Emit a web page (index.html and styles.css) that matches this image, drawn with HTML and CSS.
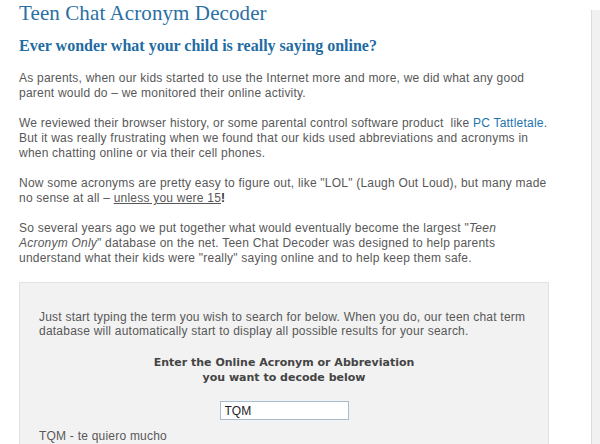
FILE: index.html
```html
<!DOCTYPE html>
<html>
<head>
<meta charset="utf-8">
<link rel="stylesheet" href="styles.css">
</head>
<body>
<div class="page">
  <main class="content">
    <h1 class="title">Teen Chat Acronym Decoder</h1>
    <h2 class="subtitle">Ever wonder what your child is really saying online?</h2>
    <p class="para">As parents, when our kids started to use the Internet more and more, we did what any good parent would do &ndash; we monitored their online activity.</p>
    <p class="para">We reviewed their browser history, or some parental control software product &nbsp;like <a class="link" href="#">PC Tattletale</a>. But it was really frustrating when we found that our kids used abbreviations and acronyms in when chatting online or via their cell phones.</p>
    <p class="para">Now some acronyms are pretty easy to figure out, like "LOL" (Laugh Out Loud), but many made no sense at all &ndash; <span class="under">unless you were 15</span><b class="excl">!</b></p>
    <p class="para para-narrow">So several years ago we put together what would eventually become the largest "<i>Teen Acronym Only</i>" database on the net. Teen Chat Decoder was designed to help parents understand what their kids were "really" saying online and to help keep them safe.</p>
    <div class="box">
      <p class="box-text">Just start typing the term you wish to search for below. When you do, our teen chat term database will automatically start to display all possible results for your search.</p>
      <p class="box-label">Enter the Online Acronym or Abbreviation<br>you want to decode below</p>
      <div class="field-row"><input class="field" type="text" value="TQM"></div>
      <p class="result">TQM - te quiero mucho</p>
    </div>
  </main>
  <aside class="sidebar"></aside>
</div>
</body>
</html>
```
FILE: styles.css
```css
html, body {
  margin: 0;
  padding: 0;
  background: #ffffff;
  height: 444px;
  overflow: hidden;
}
.page {
  display: flex;
  height: 444px;
}
.content {
  flex: none;
  width: 530px;
  padding-left: 19px;
  padding-right: 42px;
  font-family: "Liberation Sans", Arial, sans-serif;
  font-size: 12px;
  letter-spacing: 0.22px;
  color: #585858;
}
.title {
  font-family: "Liberation Serif", "Times New Roman", serif;
  font-weight: normal;
  font-size: 21px;
  line-height: 24px;
  letter-spacing: 0.1px;
  color: #2a6fa3;
  margin: 0;
  padding-top: 1px;
}
.subtitle {
  font-family: "Liberation Serif", "Times New Roman", serif;
  font-weight: bold;
  font-size: 16px;
  line-height: 20px;
  letter-spacing: 0;
  color: #1f6ca3;
  margin: 11px 0 0 0;
}
.para {
  margin: 15px 0 0 0;
  line-height: 15px;
}
.para-narrow {
  padding-right: 6px;
}
.link {
  color: #2173ad;
  text-decoration: none;
}
.under {
  text-decoration: underline;
}
.excl {
  color: #333;
}
.box {
  margin-top: 16px;
  background: #f2f2f2;
  border: 1px solid #e2e2e2;
  padding: 27px 19px 0 19px;
  height: 200px;
}
.box-text {
  margin: 0;
  line-height: 14px;
}
.box-label {
  margin: 17px 0 0 0;
  text-align: center;
  font-family: "DejaVu Sans", Verdana, sans-serif;
  font-weight: bold;
  font-size: 11px;
  line-height: 15px;
  letter-spacing: 0;
  color: #444;
}
.field-row {
  display: flex;
  justify-content: center;
  margin-top: 16px;
}
.field {
  box-sizing: border-box;
  width: 129px;
  height: 19px;
  margin: 0;
  border: 1px solid #a9bccb;
  background: #ffffff;
  padding: 0 4px;
  font-family: "Liberation Sans", Arial, sans-serif;
  font-size: 12px;
  color: #222;
  outline: none;
}
.result {
  margin: 9px 0 0 0;
  line-height: 15px;
}
.sidebar {
  flex: 1;
  margin-top: 10px;
  background: #f1f1f1;
  border-left: 1px solid #dcdcdc;
}
```
